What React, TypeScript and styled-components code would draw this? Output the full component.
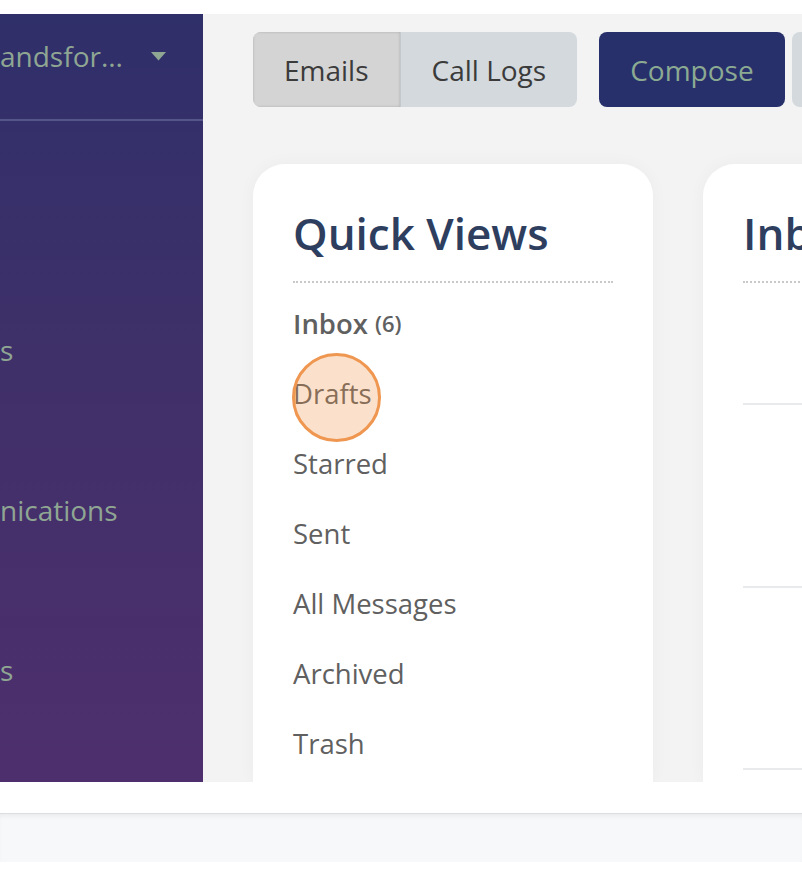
import React from "react";
import styled, { createGlobalStyle } from "styled-components";

const Global = createGlobalStyle`
  html, body { margin: 0; padding: 0; background: #ffffff; }
  body { font-family: "Open Sans", "Noto Sans", sans-serif; width: 802px; height: 877px; overflow: hidden; }
  * { box-sizing: border-box; }
`;

const Page = styled.div`
  width: 802px;
  height: 877px;
  display: flex;
  flex-direction: column;
  background: #ffffff;
  overflow: hidden;
`;

const TopStrip = styled.div`
  height: 14px;
  flex-shrink: 0;
  background: #ffffff;
`;

const Shell = styled.div`
  height: 768px;
  flex-shrink: 0;
  display: flex;
  overflow: hidden;
`;

const Sidebar = styled.aside`
  width: 203px;
  flex-shrink: 0;
  background: linear-gradient(180deg, #2f2f6a 0%, #3f3069 45%, #4e2f6e 100%);
  display: flex;
  flex-direction: column;
  overflow: hidden;
  color: #8fa693;
`;

const SidebarHeader = styled.div`
  height: 107px;
  padding-bottom: 21px;
  display: flex;
  align-items: center;
  border-bottom: 2px solid #56558a;
  white-space: nowrap;
`;

const OrgName = styled.span`
  font-size: 28px;
  line-height: 38px;
  color: #8fa693;
`;

const Caret = styled.svg`
  margin-left: 28px;
  flex-shrink: 0;
`;

const SideNav = styled.nav`
  padding-top: 149px;
  display: flex;
  flex-direction: column;
`;

const SideItem = styled.div`
  height: 160px;
  display: flex;
  align-items: center;
  font-size: 28px;
  color: #8fa693;
  white-space: nowrap;
`;

const Main = styled.main`
  flex: 1;
  min-width: 0;
  background: #f3f3f3;
  padding: 18px 0 0 50px;
  overflow: hidden;
  display: flex;
  flex-direction: column;
`;

const Toolbar = styled.div`
  height: 75px;
  display: flex;
  align-items: stretch;
  flex-shrink: 0;
`;

const Segmented = styled.div`
  display: flex;
  background: #d3d9dd;
  border-radius: 8px;
  overflow: hidden;
  flex-shrink: 0;
`;

const SegButton = styled.button<{ $active?: boolean }>`
  border: 0;
  margin: 0;
  padding: 0 31px;
  font-family: inherit;
  font-size: 28px;
  color: #3b3b3b;
  background: ${(p) => (p.$active ? "#d4d4d4" : "transparent")};
  box-shadow: ${(p) => (p.$active ? "inset 0 0 3px rgba(0,0,0,0.18)" : "none")};
  border-right: ${(p) => (p.$active ? "1px solid #c4c8cb" : "0")};
  cursor: pointer;
`;

const ActionButton = styled.button<{ $primary?: boolean; $gap: number }>`
  border: 0;
  margin: 0 0 0 ${(p) => p.$gap}px;
  padding: 0 31px;
  border-radius: 8px;
  font-family: inherit;
  font-size: 28px;
  flex-shrink: 0;
  background: ${(p) => (p.$primary ? "#27306b" : "#d3d9dd")};
  color: ${(p) => (p.$primary ? "#8caa92" : "#3b3b3b")};
  cursor: pointer;
`;

const Cards = styled.div`
  margin-top: 57px;
  display: flex;
  gap: 50px;
  flex: 1;
  min-height: 0;
`;

const Card = styled.section<{ $width: number }>`
  width: ${(p) => p.$width}px;
  flex-shrink: 0;
  background: #ffffff;
  border-radius: 32px 32px 0 0;
  padding: 39px 40px 0 40px;
  box-shadow: 0 0 18px rgba(0, 0, 0, 0.035);
  display: flex;
  flex-direction: column;
`;

const CardTitle = styled.h2`
  margin: 0;
  font-size: 44px;
  line-height: 60px;
  font-weight: 600;
  color: #2e3e5f;
  padding-bottom: 18px;
  border-bottom: 2px dotted #c9c9c9;
  white-space: nowrap;
`;

const ViewList = styled.ul`
  list-style: none;
  margin: 0;
  padding: 5px 0 0 0;
`;

const ViewItem = styled.li<{ $bold?: boolean }>`
  position: relative;
  height: 70px;
  display: flex;
  align-items: center;
  font-size: 27.5px;
  font-weight: ${(p) => (p.$bold ? 600 : 400)};
  color: #606060;
`;

const Count = styled.span`
  font-size: 22px;
  font-weight: 600;
  margin-left: 7px;
  color: #606060;
`;

const Highlight = styled.span`
  position: absolute;
  left: -1px;
  top: -5px;
  width: 89px;
  height: 89px;
  border-radius: 50%;
  background: rgba(242, 148, 70, 0.28);
  border: 3px solid #ef9650;
  pointer-events: none;
`;

const MessageRow = styled.div<{ $h: number }>`
  height: ${(p) => p.$h}px;
  border-bottom: 2px solid #e9eaec;
  flex-shrink: 0;
`;

const FooterGap = styled.div`
  height: 31px;
  flex-shrink: 0;
  background: #ffffff;
`;

const StatusBar = styled.div`
  height: 49px;
  flex-shrink: 0;
  background: #f7f8fa;
  border-top: 1px solid #dcdde1;
  box-shadow: inset 0 4px 5px -2px rgba(0, 0, 0, 0.06);
`;

const views = ["Drafts", "Starred", "Sent", "All Messages", "Archived", "Trash"];

export default function App() {
  return (
    <Page>
      <Global />
      <TopStrip />
      <Shell>
        <Sidebar>
          <SidebarHeader>
            <OrgName>andsfor...</OrgName>
            <Caret width="15" height="9" viewBox="0 0 15 9">
              <polygon points="0,0 15,0 7.5,8.5" fill="#8fa693" />
            </Caret>
          </SidebarHeader>
          <SideNav>
            <SideItem>s</SideItem>
            <SideItem>nications</SideItem>
            <SideItem>s</SideItem>
          </SideNav>
        </Sidebar>
        <Main>
          <Toolbar>
            <Segmented>
              <SegButton $active>Emails</SegButton>
              <SegButton>Call Logs</SegButton>
            </Segmented>
            <ActionButton $primary $gap={22}>Compose</ActionButton>
            <ActionButton $gap={7}>Refresh</ActionButton>
          </Toolbar>
          <Cards>
            <Card $width={400}>
              <CardTitle>Quick Views</CardTitle>
              <ViewList>
                <ViewItem $bold>
                  Inbox<Count>(6)</Count>
                </ViewItem>
                {views.map((v) => (
                  <ViewItem key={v}>
                    {v}
                    {v === "Drafts" && <Highlight />}
                  </ViewItem>
                ))}
              </ViewList>
            </Card>
            <Card $width={600}>
              <CardTitle>Inbox</CardTitle>
              <MessageRow $h={122} />
              <MessageRow $h={183} />
              <MessageRow $h={182} />
            </Card>
          </Cards>
        </Main>
      </Shell>
      <FooterGap />
      <StatusBar />
    </Page>
  );
}
